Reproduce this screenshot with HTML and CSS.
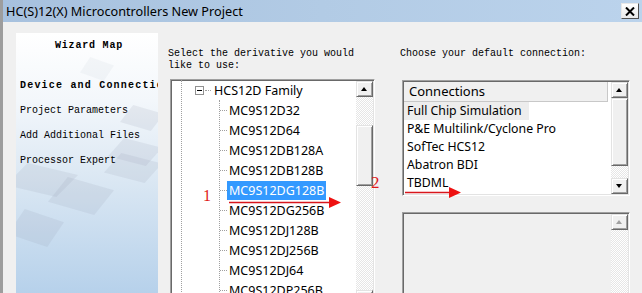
FILE: index.html
```html
<!DOCTYPE html>
<html>
<head>
  <meta charset="utf-8">
  <title>HC(S)12(X) Microcontrollers New Project</title>
  <link rel="stylesheet" href="styles.css">
</head>
<body>
  <div class="window">
    <div class="titlebar">
      <span class="title">HC(S)12(X) Microcontrollers New Project</span>
      <span class="close">
        <svg width="10" height="9" viewBox="0 0 10 9"><path d="M1 0.5 L9 8.5 M9 0.5 L1 8.5" stroke="#000" stroke-width="2"/></svg>
      </span>
    </div>

    <div class="content">
      <div class="wizard">
        <span class="shape d1"></span>
        <span class="shape d2"></span>
        <span class="shape d3"></span>
        <span class="shape d4"></span>
        <span class="shape d5"></span>
        <span class="shape d6"></span>
        <span class="shape d7"></span>
        <div class="wizard-title">Wizard Map</div>
        <ul class="steps">
          <li class="current">Device and Connections</li>
          <li>Project Parameters</li>
          <li>Add Additional Files</li>
          <li>Processor Expert</li>
        </ul>
      </div>

      <div class="derivative">
        <p class="prompt">Select the derivative you would<br>like to use:</p>
        <div class="tree-box">
          <div class="tree">
            <div class="family">
              <span class="expander"></span>
              <span class="stub"></span>
              <span class="label">HCS12D Family</span>
            </div>
            <ul class="children">
              <li><span class="label">MC9S12D32</span></li>
              <li><span class="label">MC9S12D64</span></li>
              <li><span class="label">MC9S12DB128A</span></li>
              <li><span class="label">MC9S12DB128B</span></li>
              <li><span class="label selected">MC9S12DG128B</span></li>
              <li><span class="label">MC9S12DG256B</span></li>
              <li><span class="label">MC9S12DJ128B</span></li>
              <li><span class="label">MC9S12DJ256B</span></li>
              <li><span class="label">MC9S12DJ64</span></li>
              <li><span class="label">MC9S12DP256B</span></li>
              <li><span class="label">MC9S12DP512</span></li>
            </ul>
          </div>
          <div class="scrollbar">
            <span class="sb-btn up"></span>
            <span class="sb-track"><span class="sb-thumb" style="margin-top: 28px; height: 61px;"></span></span>
            <span class="sb-btn down"></span>
          </div>
        </div>
      </div>

      <div class="connection">
        <p class="prompt">Choose your default connection:</p>
        <div class="list-box">
          <div class="list">
            <div class="list-header">Connections</div>
            <ul class="items">
              <li><span class="focused">Full Chip Simulation</span></li>
              <li>P&amp;E Multilink/Cyclone Pro</li>
              <li>SofTec HCS12</li>
              <li>Abatron BDI</li>
              <li>TBDML</li>
              <li>Open Source BDM</li>
            </ul>
          </div>
          <div class="scrollbar">
            <span class="sb-btn up"></span>
            <span class="sb-track"><span class="sb-thumb" style="margin-top: 0; height: 68px;"></span></span>
            <span class="sb-btn down"></span>
          </div>
        </div>
        <div class="info-box">
          <div class="info"></div>
          <div class="scrollbar">
            <span class="sb-btn up disabled"></span>
            <span class="sb-track"></span>
          </div>
        </div>
      </div>

      <span class="mark mark-1">1</span>
      <span class="mark mark-2">2</span>
      <svg class="arrow arrow-1" width="112" height="13" viewBox="0 0 112 13">
        <path d="M0 6.5 H101" stroke="#d8161c" stroke-width="1.5"/>
        <polygon points="100,1 112,6.5 100,12" fill="#ee1111"/>
      </svg>
      <svg class="arrow arrow-2" width="56" height="13" viewBox="0 0 56 13">
        <path d="M0 6.5 H45" stroke="#d8161c" stroke-width="1.5"/>
        <polygon points="44,1 56,6.5 44,12" fill="#ee1111"/>
      </svg>
    </div>
  </div>
</body>
</html>
```

FILE: styles.css
```css
html, body {
  margin: 0;
  padding: 0;
  width: 642px;
  height: 293px;
  overflow: hidden;
  background: #f0f0f0;
  font-family: 'Noto Sans', 'Open Sans', sans-serif;
  font-size: 12.5px;
  color: #000;
}

ul {
  list-style: none;
  margin: 0;
  padding: 0;
}

.window {
  height: 293px;
  border-left: 3px solid #9d9d9d;
  display: flex;
  flex-direction: column;
}

/* title bar */

.titlebar {
  height: 22px;
  flex: none;
  display: flex;
  align-items: center;
  justify-content: space-between;
  padding: 0 3px 0 3px;
  background: linear-gradient(to right, #a7c1de, #b2cbe5 50%, #bbd3ec);
}

.title {
  font-size: 12.7px;
  line-height: 23px;
}

.close {
  width: 16px;
  height: 14px;
  display: flex;
  align-items: center;
  justify-content: center;
  background: linear-gradient(#ffffff, #e9e9e9);
  border: 1px solid;
  border-color: #e8e8e8 #505050 #505050 #e8e8e8;
}

/* body */

.content {
  flex: 1;
  position: relative;
  display: flex;
  align-items: flex-start;
}

.prompt {
  margin: 0;
  font-family: 'Liberation Mono', monospace;
  font-size: 10px;
  line-height: 12px;
  white-space: nowrap;
}

/* wizard map */

.wizard {
  position: relative;
  overflow: hidden;
  width: 142px;
  height: 270px;
  margin: 11px 10px 0 13px;
  padding: 7px 0 0 4px;
  box-sizing: border-box;
  background: linear-gradient(#ffffff 0%, #f3f7fb 25%, #dae7f3 55%, #b3cfea 100%);
  font-family: 'Liberation Mono', monospace;
  font-size: 10px;
  white-space: nowrap;
}

.wizard-title {
  position: relative;
  text-align: center;
  font-weight: bold;
  letter-spacing: 0.8px;
  line-height: 12px;
}

.steps {
  position: relative;
  padding-top: 21px;
}

.steps li {
  height: 25px;
  line-height: 25px;
}

.steps li.current {
  font-weight: bold;
  letter-spacing: 1.2px;
}

.shape {
  position: absolute;
  background: rgba(140, 152, 170, 0.14);
  clip-path: polygon(30% 0, 100% 35%, 70% 100%, 0 65%);
}

.d1 { left: 64px; top: 24px; width: 34px; height: 24px; opacity: 0.5; }
.d2 { left: 104px; top: 72px; width: 44px; height: 26px; }
.d3 { left: 92px; top: 105px; width: 54px; height: 28px; }
.d4 { left: -10px; top: 130px; width: 72px; height: 34px; }
.d5 { left: 32px; top: 144px; width: 66px; height: 38px; }
.d6 { left: 88px; top: 120px; width: 58px; height: 30px; }
.d7 { left: -8px; top: 176px; width: 56px; height: 38px; }

/* derivative tree */

.derivative {
  width: 210px;
  padding-top: 26px;
}

.tree-box,
.list-box,
.info-box {
  display: flex;
  box-sizing: border-box;
  border: 1px solid;
  border-color: #a0a0a0 #ffffff #ffffff #a0a0a0;
  padding: 1px;
  box-shadow: inset 1px 1px 0 #696969, inset -1px -1px 0 #e3e3e3;
  background: #fff;
}

.tree-box {
  width: 205px;
  height: 229px;
  margin: 7px 0 0 2px;
}

.tree {
  flex: 1;
  overflow: hidden;
  margin: -1px 0 0 9px;
  border-left: 1px dotted #a0a0a0;
}

.family {
  height: 20px;
  display: flex;
  align-items: center;
  padding-left: 13px;
}

.expander {
  width: 7px;
  height: 7px;
  border: 1px solid #919191;
  background: linear-gradient(#000, #000) center / 5px 1px no-repeat, #fff;
}

.stub {
  width: 6px;
  border-top: 1px dotted #a0a0a0;
  margin-left: 1px;
}

.label {
  line-height: 19px;
  padding: 0 2px;
  margin-left: 1px;
  white-space: nowrap;
}

.children {
  margin-left: 37px;
  border-left: 1px dotted #a0a0a0;
}

.children li {
  height: 20px;
  display: flex;
  align-items: center;
}

.children li::before {
  content: "";
  width: 7px;
  border-top: 1px dotted #a0a0a0;
}

.children .label {
  margin-left: 0;
}

.label.selected {
  background: #3399ff;
  color: #fff;
}

/* scrollbars */

.scrollbar {
  width: 17px;
  flex: none;
  display: flex;
  flex-direction: column;
}

.sb-btn {
  height: 16px;
  flex: none;
  box-sizing: border-box;
  background: #f0f0f0;
  border: 1px solid;
  border-color: #e3e3e3 #696969 #696969 #e3e3e3;
  box-shadow: inset 1px 1px 0 #fff, inset -1px -1px 0 #a0a0a0;
  position: relative;
}

.sb-btn::after {
  content: "";
  position: absolute;
  left: 4px;
  width: 0;
  height: 0;
  border-left: 3.5px solid transparent;
  border-right: 3.5px solid transparent;
}

.sb-btn.up::after {
  top: 5px;
  border-bottom: 4px solid #000;
}

.sb-btn.down::after {
  top: 5px;
  border-top: 4px solid #000;
}

.sb-btn.up.disabled::after {
  border-bottom-color: #a0a0a0;
}

.sb-track {
  flex: 1;
  display: flex;
  flex-direction: column;
  background: repeating-conic-gradient(#ffffff 0 25%, #e6e6e6 0 50%) 0 0 / 2px 2px;
}

.sb-thumb {
  box-sizing: border-box;
  background: #f0f0f0;
  border: 1px solid;
  border-color: #e3e3e3 #696969 #696969 #e3e3e3;
  box-shadow: inset 1px 1px 0 #fff, inset -1px -1px 0 #a0a0a0;
}

/* connections */

.connection {
  width: 230px;
  margin-left: 22px;
  padding-top: 26px;
}

.list-box {
  width: 228px;
  height: 116px;
  margin: 20px 0 0 2px;
}

.list {
  flex: 1;
  overflow: hidden;
  font-size: 12.3px;
}

.list-header {
  height: 20px;
  box-sizing: border-box;
  line-height: 19px;
  padding-left: 5px;
  margin-right: 3px;
  background: #f0f0f0;
  border-bottom: 1px solid #c8c8c8;
  border-right: 1px solid #c8c8c8;
  font-size: 13px;
}

.items li {
  height: 18px;
  line-height: 18px;
  padding-left: 3px;
  white-space: nowrap;
}

.items .focused {
  display: inline-block;
  margin-left: -3px;
  padding: 0 7px 0 3px;
  background: #ededed;
}

.info-box {
  width: 228px;
  height: 100px;
  margin: 16px 0 0 2px;
  background: #f0f0f0;
}

.info {
  flex: 1;
}

/* annotations */

.mark {
  position: absolute;
  font-family: 'Liberation Serif', serif;
  color: #e01a1a;
}

.mark-1 {
  left: 200px;
  top: 166px;
  font-size: 16px;
  line-height: 16px;
}

.mark-2 {
  left: 368px;
  top: 152px;
  font-size: 17px;
  line-height: 17px;
}

.arrow {
  position: absolute;
}

.arrow-1 {
  left: 226px;
  top: 174px;
}

.arrow-2 {
  left: 402px;
  top: 164px;
}
```
